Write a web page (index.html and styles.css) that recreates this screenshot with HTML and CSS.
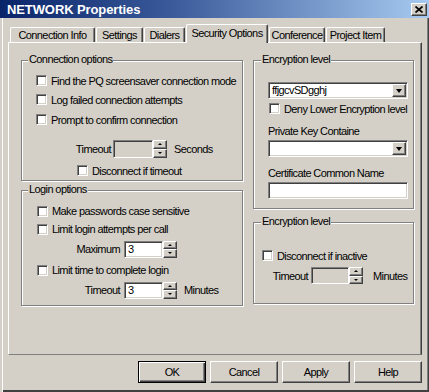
FILE: index.html
```html
<!DOCTYPE html>
<html>
<head>
<meta charset="utf-8">
<title>NETWORK Properties</title>
<link rel="stylesheet" href="styles.css">
</head>
<body>
<div class="window">
  <div class="titlebar">
    <span class="title">NETWORK Properties</span>
    <span class="close"><svg width="8" height="7" viewBox="0 0 8 7"><path d="M0.5 0.5L7.5 6.5M7.5 0.5L0.5 6.5" stroke="#000" stroke-width="1.7" fill="none"/></svg></span>
  </div>
  <div class="tabs">
    <div class="tab t-conn">Connection Info</div>
    <div class="tab t-set">Settings</div>
    <div class="tab t-dial">Dialers</div>
    <div class="tab t-sec active">Security Options</div>
    <div class="tab t-conf">Conference</div>
    <div class="tab t-proj">Project Item</div>
  </div>
  <div class="panel">
    <div class="col col-left">
      <div class="group g-conn">
        <div class="legend">Connection options</div>
        <div class="row cr-find"><span class="cb"></span>Find the PQ screensaver connection mode</div>
        <div class="row cr-log"><span class="cb"></span>Log failed connection attempts</div>
        <div class="row cr-prompt"><span class="cb"></span>Prompt to confirm connection</div>
        <div class="row cr-timeout">
          <span class="lbl lbl-conn">Timeout</span>
          <span class="field disabled f-conn"></span>
          <span class="spin"><span class="spin-up"></span><span class="spin-down"></span></span>
          <span class="unit">Seconds</span>
        </div>
        <div class="row cr-disc"><span class="cb"></span>Disconnect if timeout</div>
      </div>
      <div class="group g-login">
        <div class="legend">Login options</div>
        <div class="row lr-case"><span class="cb"></span>Make passwords case sensitive</div>
        <div class="row lr-limit"><span class="cb"></span>Limit login attempts per call</div>
        <div class="row lr-max">
          <span class="lbl lbl-login">Maximum</span>
          <span class="field f-login">3</span>
          <span class="spin"><span class="spin-up"></span><span class="spin-down"></span></span>
        </div>
        <div class="row lr-time"><span class="cb"></span>Limit time to complete login</div>
        <div class="row lr-timeout">
          <span class="lbl lbl-login">Timeout</span>
          <span class="field f-login">3</span>
          <span class="spin"><span class="spin-up"></span><span class="spin-down"></span></span>
          <span class="unit">Minutes</span>
        </div>
      </div>
    </div>
    <div class="col col-right">
      <div class="group g-enc">
        <div class="legend">Encryption level</div>
        <div class="combo er-combo1"><span class="combo-text">ffjgcvSDgghj</span><span class="drop"></span></div>
        <div class="row er-deny"><span class="cb"></span>Deny Lower Encryption level</div>
        <div class="caption er-pk">Private Key Containe</div>
        <div class="combo er-combo2"><span class="combo-text"></span><span class="drop"></span></div>
        <div class="caption er-cert">Certificate Common Name</div>
        <div class="field wide er-input"></div>
      </div>
      <div class="group g-enc2">
        <div class="legend">Encryption level</div>
        <div class="row e2-disc"><span class="cb"></span>Disconnect if inactive</div>
        <div class="row e2-timeout">
          <span class="lbl lbl-enc">Timeout</span>
          <span class="field disabled f-enc"></span>
          <span class="spin"><span class="spin-up"></span><span class="spin-down"></span></span>
          <span class="unit unit-enc">Minutes</span>
        </div>
      </div>
    </div>
  </div>
  <div class="buttons">
    <button class="btn default">OK</button>
    <button class="btn">Cancel</button>
    <button class="btn">Apply</button>
    <button class="btn">Help</button>
  </div>
</div>
</body>
</html>
```

FILE: styles.css
```css
html, body {
  margin: 0;
  padding: 0;
  background: #d4d0c8;
}

body {
  font-family: "Liberation Sans", Arial, sans-serif;
  font-size: 11px;
  letter-spacing: -0.6px;
  color: #000;
}

.window {
  width: 429px;
  height: 392px;
  box-sizing: border-box;
  background: #d4d0c8;
  box-shadow: inset 2px 0 0 #d4d0c8, inset 3px 0 0 #fff,
              inset 0 -1px 0 #404040, inset 0 -2px 0 #404040,
              inset -1px 0 0 #404040, inset -2px 0 0 #808080;
  overflow: hidden;
}

/* Title bar */
.titlebar {
  height: 18px;
  display: flex;
  align-items: center;
  justify-content: space-between;
  padding: 0 2px 0 7px;
  background: linear-gradient(to right, #0a246a 0%, #3a5a9a 40%, #a6caf0 100%);
}

.title {
  color: #fff;
  font-weight: bold;
  font-size: 13px;
  letter-spacing: -0.1px;
}

.close {
  width: 16px;
  height: 13px;
  box-sizing: border-box;
  background: #d4d0c8;
  border-top: 1px solid #fff;
  border-left: 1px solid #fff;
  border-right: 1px solid #404040;
  border-bottom: 1px solid #404040;
  box-shadow: inset -1px -1px 0 #808080;
  display: flex;
  align-items: center;
  justify-content: center;
  margin-top: 1px;
}

.close svg {
  display: block;
}

/* Tabs */
.tabs {
  display: flex;
  align-items: flex-end;
  height: 18px;
  margin-top: 6px;
  padding-left: 10px;
}

.tab {
  height: 15px;
  box-sizing: border-box;
  margin-right: 1px;
  border-top: 1px solid #fff;
  border-left: 1px solid #fff;
  border-right: 1px solid #404040;
  box-shadow: inset -1px 0 0 #808080;
  border-radius: 2px 2px 0 0;
  text-align: center;
  line-height: 14px;
  white-space: nowrap;
}

.tab.active {
  height: 19px;
  margin-bottom: -1px;
  position: relative;
  z-index: 1;
  background: #d4d0c8;
  line-height: 16px;
  padding-bottom: 1px;
}

.t-conn { width: 85px; }
.t-set { width: 47px; }
.t-dial { width: 41px; }
.t-sec { width: 82px; }
.t-conf { width: 56px; }
.t-proj { width: 59px; }

/* Panel */
.panel {
  width: 414px;
  height: 313px;
  box-sizing: border-box;
  margin-left: 8px;
  border-top: 1px solid #fff;
  border-left: 1px solid #fff;
  border-right: 1px solid #404040;
  border-bottom: 1px solid #808080;
  box-shadow: inset -1px 0 0 #808080;
  display: flex;
  gap: 10px;
  padding: 17px 0 0 12px;
}

.col-left { width: 222px; }
.col-right { width: 161px; }

/* Group boxes */
.group {
  box-sizing: border-box;
  border: 1px solid #808080;
  box-shadow: 1px 1px 0 #fff, inset 1px 1px 0 #fff;
}

.legend {
  width: max-content;
  height: 13px;
  line-height: 13px;
  margin-top: -8px;
  padding: 0 1px;
  background: #d4d0c8;
}

.g-conn { height: 121px; padding-left: 14px; }
.g-login { height: 116px; margin-top: 9px; padding-left: 15px; }
.g-enc { height: 149px; padding-left: 14px; }
.g-enc2 { height: 82px; margin-top: 13px; padding-left: 8px; }
.g-conn .legend { margin-left: -8px; }
.g-login .legend { margin-left: -9px; }
.g-enc .legend { margin-left: -7px; }
.g-enc2 .legend { margin-left: -1px; }

/* Rows */
.row {
  display: flex;
  align-items: center;
  height: 19px;
  white-space: nowrap;
}

.cb {
  width: 11px;
  height: 11px;
  box-sizing: border-box;
  flex-shrink: 0;
  background: #fff;
  border: 1px solid;
  border-color: #808080 #fff #fff #808080;
  box-shadow: inset 1px 1px 0 #404040, inset -1px -1px 0 #d4d0c8;
  margin-right: 4px;
}

.cr-find { margin-top: 5px; }
.cr-prompt { margin-top: 1px; }
.cr-timeout { margin-top: 10px; margin-left: -14px; }
.cr-disc { margin-top: 3px; padding-left: 41px; }

.g-login .row { height: 18px; }
.lr-case { margin-top: 6px; }
.lr-max { margin-top: 2px; margin-left: -15px; }
.lr-time { margin-top: 3px; }
.lr-timeout { margin-top: 2px; margin-left: -15px; }

.lbl { text-align: right; flex-shrink: 0; }
.lbl-conn { width: 89px; margin-right: 2px; }
.lbl-login { width: 98px; margin-right: 4px; }
.lbl-enc { width: 46px; margin-right: 3px; }

/* Edit fields */
.field {
  display: block;
  box-sizing: border-box;
  height: 17px;
  background: #fff;
  border: 1px solid;
  border-color: #808080 #fff #fff #808080;
  box-shadow: inset 1px 1px 0 #404040, inset -1px -1px 0 #d4d0c8;
  padding-left: 3px;
  line-height: 15px;
}

.field.disabled { background: #d4d0c8; }
.f-conn { width: 40px; height: 18px; }
.f-login { width: 39px; }
.f-enc { width: 38px; }
.field.wide { width: 140px; }

.spin {
  display: flex;
  flex-direction: column;
  width: 14px;
  height: 17px;
  flex-shrink: 0;
}

.cr-timeout .spin { height: 18px; }

.spin-up, .spin-down {
  flex: 1;
  box-sizing: border-box;
  background: #d4d0c8;
  border-top: 1px solid #fff;
  border-left: 1px solid #fff;
  border-right: 1px solid #404040;
  border-bottom: 1px solid #404040;
  box-shadow: inset -1px -1px 0 #808080;
  display: flex;
  align-items: center;
  justify-content: center;
}

.spin-up::after, .spin-down::after {
  content: "";
  width: 0;
  height: 0;
  border-left: 2px solid transparent;
  border-right: 2px solid transparent;
}

.spin-up::after { border-bottom: 2px solid #000; }
.spin-down::after { border-top: 2px solid #000; }

.unit { margin-left: 7px; }
.unit-enc { margin-left: 10px; }

/* Right column */
.combo {
  display: flex;
  align-items: center;
  width: 140px;
  height: 17px;
  box-sizing: border-box;
  background: #fff;
  border: 1px solid;
  border-color: #808080 #fff #fff #808080;
  box-shadow: inset 1px 1px 0 #404040, inset -1px -1px 0 #d4d0c8;
  padding: 1px;
}

.combo-text {
  flex: 1;
  padding-left: 2px;
  line-height: 13px;
}

.drop {
  width: 14px;
  height: 13px;
  box-sizing: border-box;
  background: #d4d0c8;
  border-top: 1px solid #fff;
  border-left: 1px solid #fff;
  border-right: 1px solid #404040;
  border-bottom: 1px solid #404040;
  box-shadow: inset -1px -1px 0 #808080;
  display: flex;
  align-items: center;
  justify-content: center;
}

.drop::after {
  content: "";
  width: 0;
  height: 0;
  border-left: 3.5px solid transparent;
  border-right: 3.5px solid transparent;
  border-top: 4px solid #000;
}

.er-combo1 { margin-top: 16px; }
.er-deny { height: 13px; margin-top: 3px; padding-left: 1px; }
.caption { height: 13px; line-height: 13px; white-space: nowrap; }
.er-pk { margin-top: 10px; }
.er-combo2 { margin-top: 2px; }
.er-cert { margin-top: 10px; }
.er-input { margin-top: 2px; }

.e2-disc { height: 13px; margin-top: 21px; }
.e2-timeout { height: 17px; margin-top: 5px; }

/* Buttons */
.buttons {
  display: flex;
  justify-content: flex-end;
  gap: 4px;
  margin-top: 6px;
  padding-right: 7px;
}

.btn {
  width: 68px;
  height: 22px;
  box-sizing: border-box;
  background: #d4d0c8;
  font: inherit;
  letter-spacing: inherit;
  color: #000;
  border-top: 1px solid #fff;
  border-left: 1px solid #fff;
  border-right: 1px solid #404040;
  border-bottom: 1px solid #404040;
  box-shadow: inset -1px -1px 0 #808080;
  padding: 0;
}

.btn.default {
  border: 1px solid #000;
  box-shadow: inset 1px 1px 0 #fff, inset -1px -1px 0 #404040, inset -2px -2px 0 #808080;
}
```
